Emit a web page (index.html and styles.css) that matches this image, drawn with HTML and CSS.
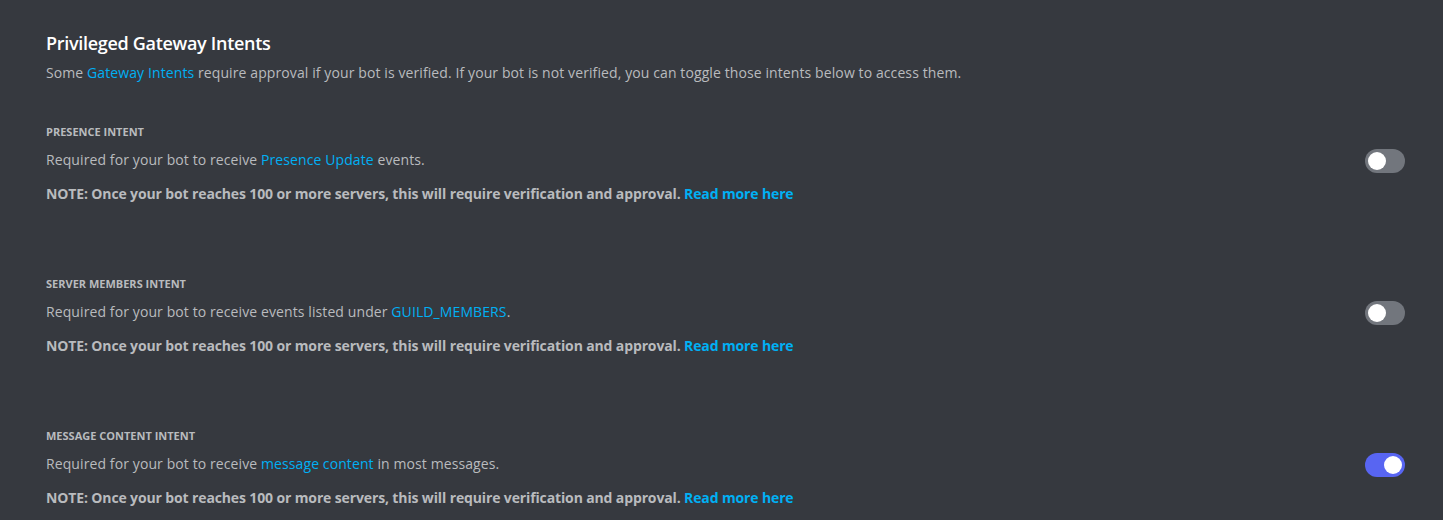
FILE: index.html
```html
<!DOCTYPE html>
<html lang="en">
<head>
<meta charset="utf-8">
<title>Privileged Gateway Intents</title>
<link rel="stylesheet" href="styles.css">
</head>
<body>
<main class="page">
  <header class="intro">
    <h2 class="title">Privileged Gateway Intents</h2>
    <p class="desc">Some <a class="link" href="#">Gateway Intents</a> require approval if your bot is verified. If your bot is not verified, you can toggle those intents below to access them.</p>
  </header>

  <section class="intent">
    <div class="intent-text">
      <h5 class="label">Presence Intent</h5>
      <p class="desc">Required for your bot to receive <a class="link" href="#">Presence Update</a> events.</p>
      <p class="note">NOTE: Once your bot reaches 100 or more servers, this will require verification and approval. <a class="link" href="#">Read more here</a></p>
    </div>
    <div class="toggle"><span class="knob"></span></div>
  </section>

  <section class="intent">
    <div class="intent-text">
      <h5 class="label">Server Members Intent</h5>
      <p class="desc">Required for your bot to receive events listed under <a class="link" href="#">GUILD_MEMBERS</a>.</p>
      <p class="note">NOTE: Once your bot reaches 100 or more servers, this will require verification and approval. <a class="link" href="#">Read more here</a></p>
    </div>
    <div class="toggle"><span class="knob"></span></div>
  </section>

  <section class="intent">
    <div class="intent-text">
      <h5 class="label">Message Content Intent</h5>
      <p class="desc">Required for your bot to receive <a class="link" href="#">message content</a> in most messages.</p>
      <p class="note">NOTE: Once your bot reaches 100 or more servers, this will require verification and approval. <a class="link" href="#">Read more here</a></p>
    </div>
    <div class="toggle on"><span class="knob"></span></div>
  </section>
</main>
</body>
</html>
```

FILE: styles.css
```css
html, body {
  margin: 0;
  padding: 0;
  background: #36393f;
}
body {
  font-family: "Open Sans", "Noto Sans", sans-serif;
  color: #b9bbbe;
  -webkit-font-smoothing: antialiased;
}
.page {
  padding: 29px 38px 0 46px;
  display: flex;
  flex-direction: column;
}
.title {
  margin: 0;
  color: #ffffff;
  font-size: 18px;
  font-weight: 600;
  line-height: 28px;
  letter-spacing: -0.3px;
}
.desc {
  margin: 0;
  font-size: 14px;
  line-height: 20px;
  color: #b9bbbe;
  letter-spacing: 0.1px;
}
.intro .desc {
  margin-top: 6px;
}
.link {
  color: #00b0f4;
  text-decoration: none;
}
.intent {
  display: flex;
  align-items: flex-start;
  justify-content: space-between;
  margin-top: 41px;
  height: 111px;
}
.intent-text {
  display: flex;
  flex-direction: column;
}
.label {
  margin: 0 0 10px 0;
  font-size: 11px;
  font-weight: 700;
  text-transform: uppercase;
  line-height: 16px;
  color: #b9bbbe;
}
.note {
  margin: 14px 0 0 0;
  font-size: 14px;
  font-weight: 700;
  line-height: 20px;
  color: #b9bbbe;
  letter-spacing: -0.13px;
}
.note .link {
  font-weight: 700;
}
.toggle {
  margin-top: 25px;
  width: 40px;
  height: 24px;
  border-radius: 12px;
  background: #72767d;
  display: flex;
  align-items: center;
  padding: 0 3px;
  box-sizing: border-box;
  flex-shrink: 0;
}
.toggle.on {
  background: #5865f2;
  justify-content: flex-end;
}
.knob {
  width: 18px;
  height: 18px;
  border-radius: 50%;
  background: #ffffff;
}
```
